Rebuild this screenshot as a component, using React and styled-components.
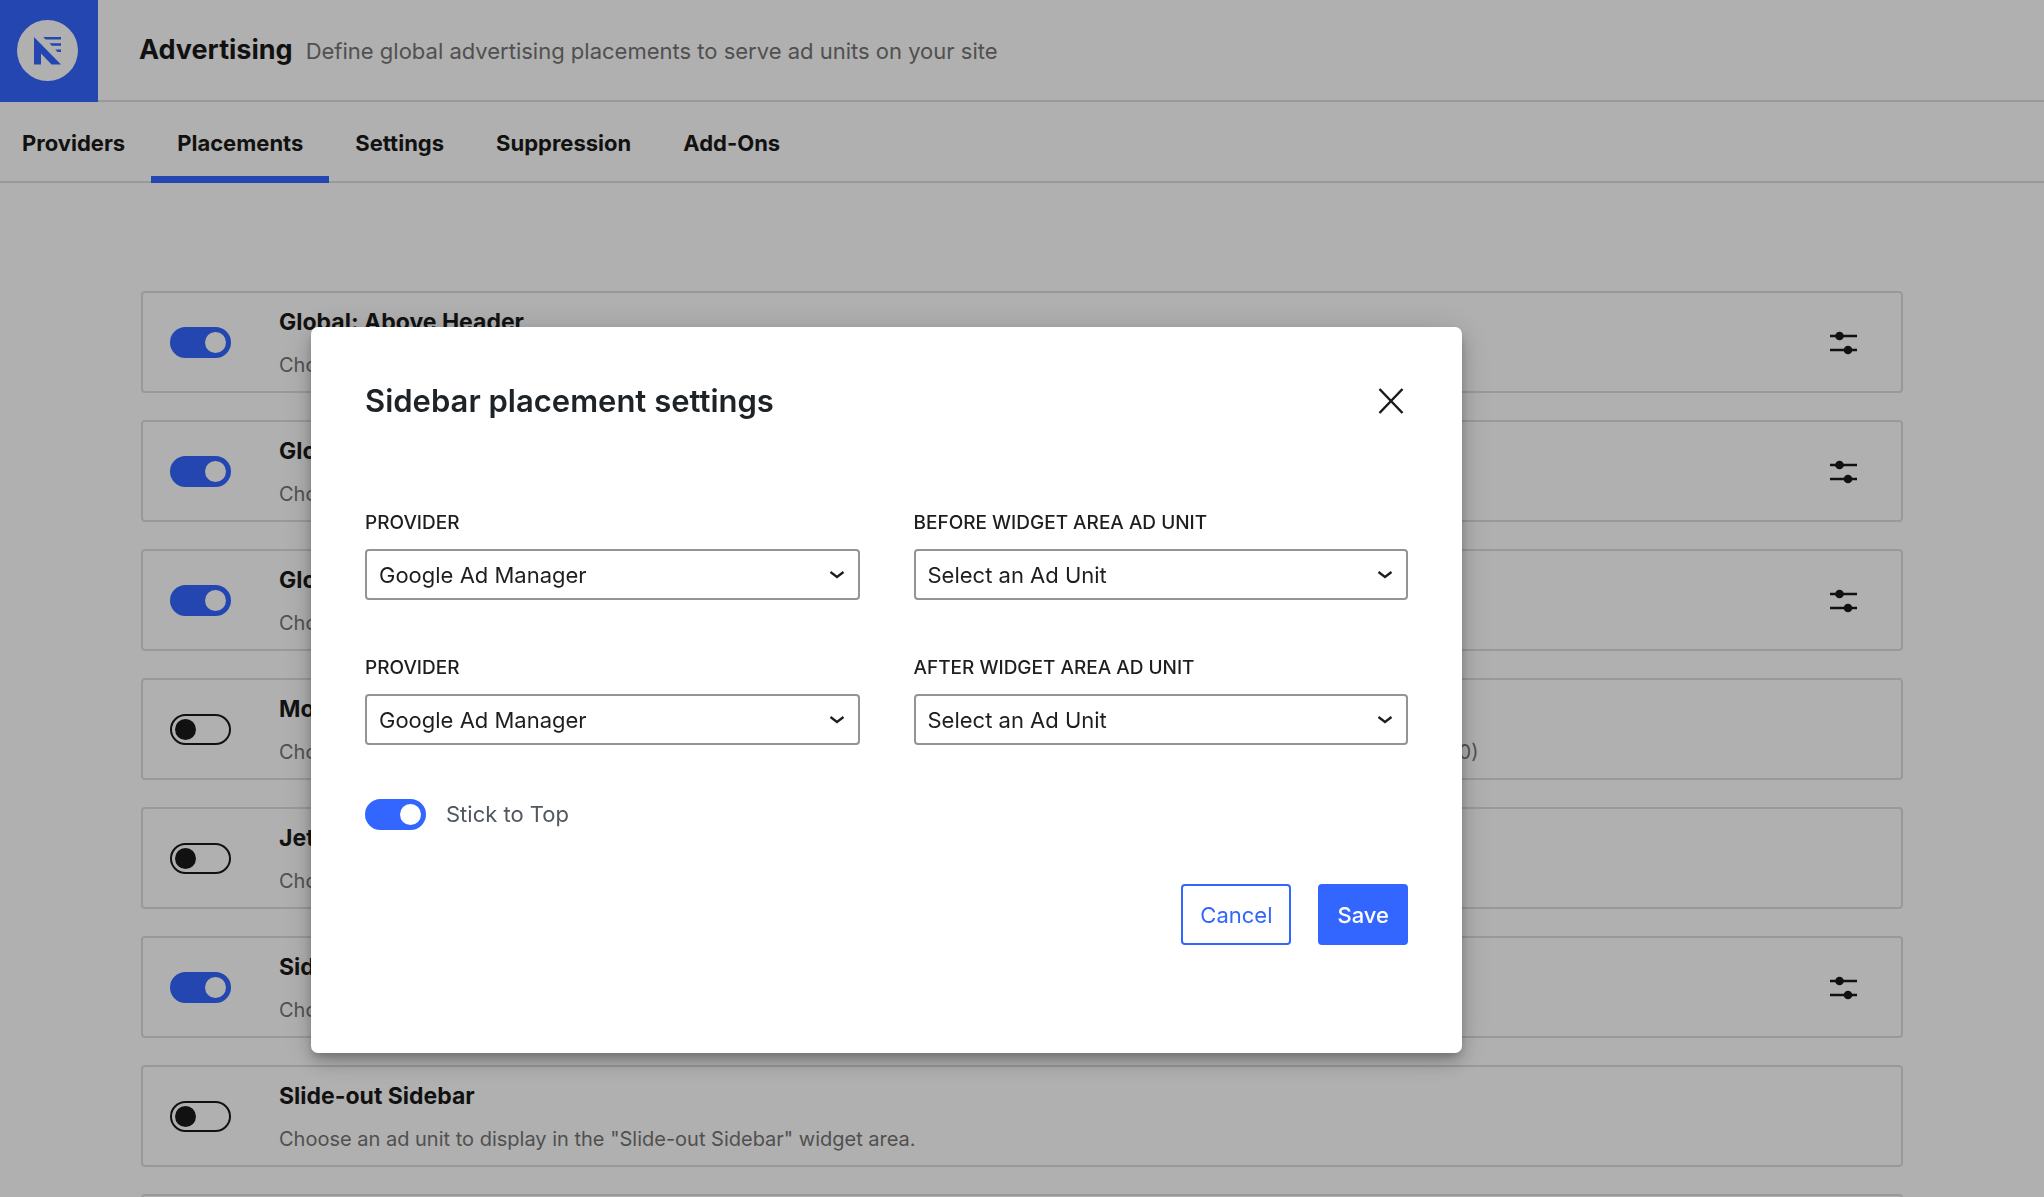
import React from "react";
import styled, { createGlobalStyle } from "styled-components";

const GlobalStyle = createGlobalStyle`
  *, *::before, *::after { box-sizing: border-box; }
  html, body { height: 100%; margin: 0; }
  body {
    overflow: hidden;
    background: #fff;
    color: #1a1a1a;
    font-family: Inter, "Liberation Sans", sans-serif;
    font-size: 22px;
    line-height: 32px;
  }
  h1, h2, h3, p { margin: 0; }
  button, select { font: inherit; }
`;

const Header = styled.header`
  display: flex;
  align-items: center;
  border-bottom: 2px solid #dedede;
`;

const LogoLink = styled.a`
  display: flex;
  align-items: center;
  padding: 20px 20px 21px 17px;
  margin-bottom: -2px;
  background: #36f;
`;

const HeaderText = styled.div`
  display: flex;
  align-items: baseline;
  gap: 13px;
  padding-left: 41px;
`;

const PageTitle = styled.h1`
  font-size: 27px;
  font-weight: 700;
`;

const Muted = styled.p`
  color: #757575;
`;

const Tabs = styled.nav`
  display: flex;
  padding-right: 26px;
  border-bottom: 2px solid #dedede;
`;

const Tab = styled.a`
  padding: 25px 26px 17px;
  margin-bottom: -2px;
  border-bottom: 7px solid ${(p) => (p.$active ? "#36f" : "transparent")};
  color: inherit;
  font-weight: 700;
  text-decoration: none;
  &:first-child { padding-left: 22px; }
`;

const List = styled.main`
  display: grid;
  gap: 27px;
  padding: 108px 141px 27px;
`;

const Card = styled.section`
  display: flex;
  align-items: center;
  padding: 11px 27px 10px;
  border: 2px solid #dedede;
  border-radius: 4px;
`;

const CardBody = styled.div`
  flex: 1;
  display: grid;
  gap: 11px;
  margin-left: 48px;
  padding-top: 2px;
`;

const CardTitle = styled.h3`
  font-size: 23px;
  font-weight: 700;
`;

const CardText = styled(Muted)`
  font-size: 20px;
`;

const Toggle = styled.input`
  appearance: none;
  flex: none;
  display: flex;
  align-items: center;
  width: 61px;
  height: 31px;
  margin: 0;
  padding: 0 3px;
  border: 2px solid #1a1a1a;
  border-radius: 16px;
  background: transparent;
  &::before {
    content: "";
    width: 21px;
    height: 21px;
    border-radius: 50%;
    background: #1a1a1a;
  }
  &:checked {
    justify-content: flex-end;
    border-color: #36f;
    background: #36f;
  }
  &:checked::before { background: #fff; }
`;

const IconButton = styled.button`
  flex: none;
  display: grid;
  place-items: center;
  width: 61px;
  height: 61px;
  padding: 0;
  border: 0;
  background: none;
  color: #1a1a1a;
`;

const Overlay = styled.div`
  position: fixed;
  inset: 0;
  display: flex;
  justify-content: center;
  align-items: flex-start;
  padding: 327px 271px 0 0;
  background: rgba(0, 0, 0, 0.31);
`;

const Dialog = styled.div`
  width: 1151px;
  max-width: 100%;
  padding: 43px 54px 108px;
  border-radius: 7px;
  background: #fff;
  box-shadow:
    0 5px 8px -2px rgba(0, 0, 0, 0.2),
    0 10px 17px rgba(0, 0, 0, 0.16),
    0 3px 34px rgba(0, 0, 0, 0.16);
`;

const DialogHeader = styled.div`
  display: flex;
  align-items: center;
  justify-content: space-between;
`;

const CloseButton = styled(IconButton)`
  margin-right: -13px;
`;

const DialogTitle = styled.h2`
  color: #1d2327;
  font-size: 31px;
  font-weight: 600;
`;

const Fields = styled.div`
  display: grid;
  grid-template-columns: 1fr 1fr;
  gap: 54px;
  margin-top: 78px;
`;

const Field = styled.div`
  display: grid;
  gap: 12px;
`;

const Label = styled.label`
  color: #1e1e1e;
  font-size: 19px;
  font-weight: 500;
  line-height: 28px;
  text-transform: uppercase;
`;

const SelectBox = styled.div`
  display: grid;
  grid-template-columns: 1fr 46px;
  align-items: center;
  svg { grid-area: 1 / 2; justify-self: center; pointer-events: none; }
`;

const Select = styled.select`
  appearance: none;
  grid-area: 1 / 1 / 2 / 3;
  height: 51px;
  padding: 0 46px 0 12px;
  border: 2px solid #949494;
  border-radius: 4px;
  background: #fff;
  color: #1e1e1e;
`;

const ToggleRow = styled.label`
  display: flex;
  align-items: center;
  gap: 20px;
  margin-top: 53px;
  color: #50575e;
`;

const Actions = styled.div`
  display: flex;
  justify-content: flex-end;
  gap: 27px;
  margin-top: 54px;
`;

const Button = styled.button`
  height: 61px;
  padding: 0 17px;
  border: 2px solid #36f;
  border-radius: 4px;
  background: ${(p) => (p.$primary ? "#36f" : "#fff")};
  color: ${(p) => (p.$primary ? "#fff" : "#36f")};
  font-weight: ${(p) => (p.$primary ? 500 : 400)};
`;

const Logo = () => (
  <svg width="61" height="61" viewBox="0 0 61 61" aria-hidden="true">
    <circle cx="30.5" cy="30.5" r="30.5" fill="#fff" />
    <path
      fill="#36f"
      d="M17 17l27 27.500h-9.500l-10.500-11v11h-7zM26.300 17h17.700v2.400h-15.400zM32.500 23.300h11.500v2.400h-9.200zM38.300 29.600h5.700v2.400h-3.400z"
    />
  </svg>
);

const SlidersIcon = () => (
  <svg width="28" height="24" viewBox="0 0 28 24" aria-hidden="true">
    <path d="M0 5h27M0 19h27" stroke="currentColor" strokeWidth="2.700" />
    <circle cx="9.500" cy="5" r="4.300" fill="currentColor" />
    <circle cx="18" cy="19" r="4.300" fill="currentColor" />
  </svg>
);

const CloseIcon = () => (
  <svg width="26" height="26" viewBox="0 0 26 26" aria-hidden="true">
    <path d="M1.500 1l23 24M24.500 1l-23 24" stroke="currentColor" strokeWidth="2.500" />
  </svg>
);

const Chevron = () => (
  <svg width="16" height="10" viewBox="0 0 16 10" fill="none" aria-hidden="true">
    <path d="M1.500 2l6.500 5 6.500-5" stroke="#1e1e1e" strokeWidth="2.300" />
  </svg>
);

const tabs = ["Providers", "Placements", "Settings", "Suppression", "Add-Ons"];

const placements = [
  { title: "Global: Above Header", on: true, text: "Choose an ad unit to display above the header." },
  { title: "Global: Below Header", on: true, text: "Choose an ad unit to display below the header." },
  { title: "Global: Above Footer", on: true, text: "Choose an ad unit to display above the footer." },
  {
    title: "Mobile Sticky Footer",
    on: false,
    text: "Choose an ad unit to display sticky at the bottom of the viewport on mobile devices (recommended sizes are 320x50, 300x50)",
  },
  { title: "Jetpack Ads", on: false, text: "Choose an ad unit to display in Jetpack blocks." },
  { title: "Sidebar", on: true, text: 'Choose an ad unit to display in the "Sidebar" widget area.' },
  { title: "Slide-out Sidebar", on: false, text: 'Choose an ad unit to display in the "Slide-out Sidebar" widget area.' },
  { title: "Footer", on: false, text: 'Choose an ad unit to display in the "Footer" widget area.' },
];

const fields = [
  { id: "before-provider", label: "Provider", value: "Google Ad Manager" },
  { id: "before-unit", label: "Before widget area ad unit", value: "Select an Ad Unit" },
  { id: "after-provider", label: "Provider", value: "Google Ad Manager" },
  { id: "after-unit", label: "After widget area ad unit", value: "Select an Ad Unit" },
];

export default function App() {
  return (
    <>
      <GlobalStyle />
      <Header>
        <LogoLink href="#" aria-label="Newspack">
          <Logo />
        </LogoLink>
        <HeaderText>
          <PageTitle>Advertising</PageTitle>
          <Muted>Define global advertising placements to serve ad units on your site</Muted>
        </HeaderText>
      </Header>
      <Tabs>
        {tabs.map((name) => (
          <Tab key={name} href="#" $active={name === "Placements"}>
            {name}
          </Tab>
        ))}
      </Tabs>
      <List>
        {placements.map((p) => (
          <Card key={p.title}>
            <Toggle type="checkbox" defaultChecked={p.on} aria-label={p.title} />
            <CardBody>
              <CardTitle>{p.title}</CardTitle>
              <CardText>{p.text}</CardText>
            </CardBody>
            {p.on && (
              <IconButton aria-label={`${p.title} settings`}>
                <SlidersIcon />
              </IconButton>
            )}
          </Card>
        ))}
      </List>
      <Overlay>
        <Dialog role="dialog" aria-modal="true" aria-labelledby="dialog-title">
          <DialogHeader>
            <DialogTitle id="dialog-title">Sidebar placement settings</DialogTitle>
            <CloseButton aria-label="Close">
              <CloseIcon />
            </CloseButton>
          </DialogHeader>
          <Fields>
            {fields.map((f) => (
              <Field key={f.id}>
                <Label htmlFor={f.id}>{f.label}</Label>
                <SelectBox>
                  <Select id={f.id}>
                    <option>{f.value}</option>
                  </Select>
                  <Chevron />
                </SelectBox>
              </Field>
            ))}
          </Fields>
          <ToggleRow>
            <Toggle type="checkbox" defaultChecked />
            Stick to Top
          </ToggleRow>
          <Actions>
            <Button>Cancel</Button>
            <Button $primary>Save</Button>
          </Actions>
        </Dialog>
      </Overlay>
    </>
  );
}
